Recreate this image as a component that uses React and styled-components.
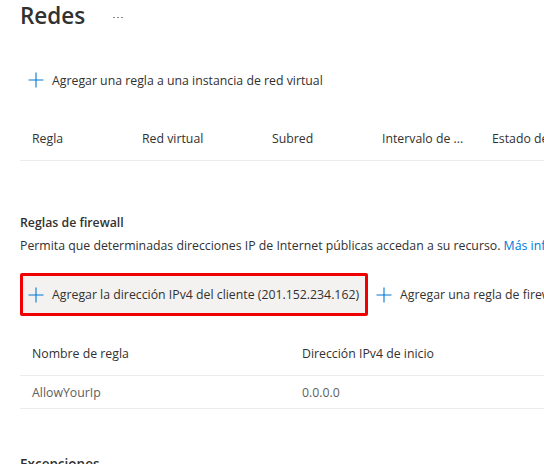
import styled, { createGlobalStyle } from 'styled-components';

const GlobalStyle = createGlobalStyle`
  html, body {
    margin: 0;
    overflow: hidden;
    background: #ffffff;
  }
  body {
    font-family: 'Open Sans', 'Noto Sans', sans-serif;
    color: #323130;
  }
`;

const firstColumns = [
  { label: 'Regla', width: 110 },
  { label: 'Red virtual', width: 130 },
  { label: 'Subred', width: 110 },
  { label: 'Intervalo de ...', width: 110 },
  { label: 'Estado de', width: 110 },
];

const firewallColumns = [
  { label: 'Nombre de regla', width: 270 },
  { label: 'Dirección IPv4 de inicio', width: 270 },
];

const firewallRows = [['AllowYourIp', '0.0.0.0']];

// icono "+" delgado de Fluent
const PlusIcon = () => (
  <svg width="16" height="16" viewBox="0 0 16 16" fill="none">
    <path d="M8 0.5v15M0.5 8h15" stroke="#0078d4" strokeWidth="1.1" />
  </svg>
);

const App = () => {
  return (
    <>
      <GlobalStyle />
      <Page>
        <TitleRow>
          <Title>Redes</Title>
          <More>
            <Dot />
            <Dot />
            <Dot />
          </More>
        </TitleRow>

        <CommandBar>
          <CommandButton type="button">
            <PlusIcon />
            Agregar una regla a una instancia de red virtual
          </CommandButton>
        </CommandBar>

        <Table>
          <HeaderRow>
            {firstColumns.map((col) => (
              <Cell key={col.label} $width={col.width}>
                {col.label}
              </Cell>
            ))}
          </HeaderRow>
        </Table>

        <Section>
          <SectionTitle>Reglas de firewall</SectionTitle>
          <Description>
            Permita que determinadas direcciones IP de Internet públicas accedan a su recurso.{' '}
            <Link href="#">Más información</Link>
          </Description>
        </Section>

        <Toolbar>
          <CommandButton type="button" $highlighted>
            <PlusIcon />
            Agregar la dirección IPv4 del cliente (201.152.234.162)
          </CommandButton>
          <CommandButton type="button">
            <PlusIcon />
            Agregar una regla de firewall
          </CommandButton>
        </Toolbar>

        <FirewallTable>
          <HeaderRow>
            {firewallColumns.map((col) => (
              <Cell key={col.label} $width={col.width}>
                {col.label}
              </Cell>
            ))}
          </HeaderRow>
          {firewallRows.map((row) => (
            <DataRow key={row[0]}>
              {row.map((value, i) => (
                <Cell key={i} $width={firewallColumns[i].width}>
                  {value}
                </Cell>
              ))}
            </DataRow>
          ))}
        </FirewallTable>

        <Exceptions>Excepciones</Exceptions>
      </Page>
    </>
  );
};

export default App;

const Page = styled.main`
  padding-left: 20px;
  width: 800px;
  display: flex;
  flex-direction: column;
`;

const TitleRow = styled.div`
  display: flex;
  align-items: center;
  gap: 28px;
  height: 32px;
`;

const Title = styled.h1`
  margin: 0;
  font-size: 22.5px;
  line-height: 32px;
  font-weight: 600;
  color: #323130;
`;

const More = styled.span`
  display: flex;
  gap: 2px;
  margin-top: 2px;
`;

const Dot = styled.span`
  width: 2px;
  height: 1px;
  background: #8a8886;
`;

const CommandBar = styled.div`
  display: flex;
  margin-top: 30px;
  height: 36px;
`;

const Toolbar = styled.div`
  display: flex;
  align-items: center;
  margin-top: 17px;
  height: 43px;
`;

const CommandButton = styled.button`
  display: flex;
  align-items: center;
  gap: 8px;
  height: ${({ $highlighted }) => ($highlighted ? '43px' : '36px')};
  padding: ${({ $highlighted }) => ($highlighted ? '0 6px 0 5px' : '0 8px')};
  box-sizing: border-box;
  border: ${({ $highlighted }) => ($highlighted ? '3px solid #f00000' : '0')};
  border-radius: 2px;
  background: ${({ $highlighted }) => ($highlighted ? '#f3f2f1' : 'transparent')};
  font-family: inherit;
  font-size: 12.3px;
  color: #323130;
  white-space: nowrap;
  cursor: pointer;
`;

const Table = styled.div`
  margin-top: 21px;
  display: flex;
  flex-direction: column;
`;

const FirewallTable = styled(Table)`
  margin-top: 18px;
`;

const HeaderRow = styled.div`
  display: flex;
  align-items: center;
  height: 42px;
  padding-bottom: 3px;
  box-sizing: border-box;
  border-bottom: 1px solid #edebe9;
`;

const DataRow = styled.div`
  display: flex;
  align-items: center;
  height: 33px;
  box-sizing: border-box;
  border-bottom: 1px solid #edebe9;
  color: #605e5c;
`;

const Cell = styled.div`
  width: ${({ $width }) => $width}px;
  flex-shrink: 0;
  padding-left: 12px;
  box-sizing: border-box;
  font-size: 12.3px;
  white-space: nowrap;
  overflow: hidden;
`;

const Section = styled.section`
  margin-top: 52px;
  display: flex;
  flex-direction: column;
  gap: 3px;
`;

const SectionTitle = styled.h2`
  margin: 0;
  font-size: 12.3px;
  line-height: 20px;
  font-weight: 600;
  color: #323130;
`;

const Description = styled.p`
  margin: 0;
  font-size: 12.3px;
  line-height: 20px;
  color: #323130;
  white-space: nowrap;
`;

const Link = styled.a`
  color: #0078d4;
  text-decoration: none;
`;

const Exceptions = styled.h2`
  margin: 45px 0 0;
  font-size: 13.5px;
  line-height: 20px;
  font-weight: 600;
`;
